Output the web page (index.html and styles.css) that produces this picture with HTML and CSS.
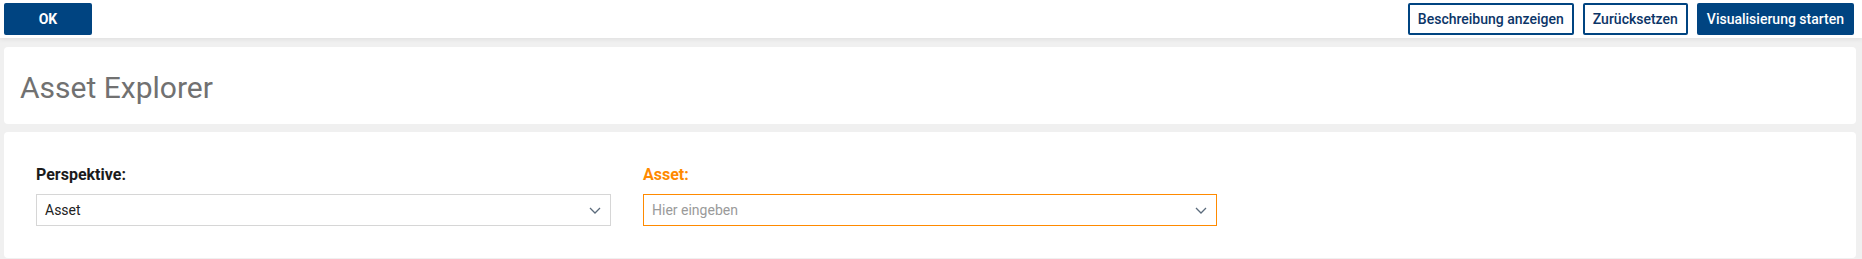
FILE: index.html
```html
<!DOCTYPE html>
<html lang="de">
<head>
<meta charset="utf-8">
<title>Asset Explorer</title>
<link rel="stylesheet" href="styles.css">
</head>
<body>
<header class="topbar">
  <button class="btn btn-primary btn-ok">OK</button>
  <div class="topbar-actions">
    <button class="btn btn-outline">Beschreibung anzeigen</button>
    <button class="btn btn-outline">Zurücksetzen</button>
    <button class="btn btn-primary">Visualisierung starten</button>
  </div>
</header>
<main class="content">
  <section class="panel panel-title">
    <h1 class="title">Asset Explorer</h1>
  </section>
  <section class="panel panel-form">
    <div class="field">
      <label class="field-label">Perspektive:</label>
      <div class="select">
        <span class="select-value">Asset</span>
        <svg class="chevron" width="12" height="7" viewBox="0 0 12 7"><path d="M1 1 L6 6 L11 1" fill="none" stroke="#5b6b7c" stroke-width="1.3"/></svg>
      </div>
    </div>
    <div class="field">
      <label class="field-label field-label-active">Asset:</label>
      <div class="select select-active">
        <span class="select-placeholder">Hier eingeben</span>
        <svg class="chevron" width="12" height="7" viewBox="0 0 12 7"><path d="M1 1 L6 6 L11 1" fill="none" stroke="#5b6b7c" stroke-width="1.3"/></svg>
      </div>
    </div>
  </section>
</main>
</body>
</html>
```
FILE: styles.css
```css
* { box-sizing: border-box; }
html, body {
  margin: 0;
  padding: 0;
}
body {
  background: #f0f0f0;
  font-family: Roboto, "Liberation Sans", Arial, sans-serif;
  color: #222;
  height: 259px;
  overflow: hidden;
}
.topbar {
  height: 38px;
  background: #fff;
  display: flex;
  align-items: flex-start;
  justify-content: space-between;
  padding: 3px 8px 0 4px;
  box-shadow: 0 2px 4px rgba(0,0,0,0.06);
  position: relative;
}
.topbar-actions {
  display: flex;
  gap: 9px;
}
.btn {
  height: 32px;
  font-family: Roboto, "Liberation Sans", Arial, sans-serif;
  font-size: 14px;
  font-weight: 500;
  border-radius: 2px;
  padding: 0 8px;
  cursor: pointer;
  white-space: nowrap;
}
.btn-primary {
  background: #004481;
  border: 2px solid #004481;
  color: #fff;
}
.btn-outline {
  background: #fff;
  border: 2px solid #004481;
  color: #0b3567;
}
.btn-ok {
  width: 88px;
  font-weight: 700;
}
.content {
  padding: 9px 6px 0 4px;
  display: flex;
  flex-direction: column;
  gap: 8px;
}
.panel {
  background: #fff;
  border-radius: 4px;
}
.panel-title {
  height: 77px;
  display: flex;
  align-items: center;
  padding-left: 16px;
}
.title {
  margin: 0;
  font-size: 30px;
  font-weight: 400;
  color: #717171;
  padding-top: 3px;
}
.panel-form {
  height: 126px;
  padding: 34px 32px 32px 32px;
  display: grid;
  grid-template-columns: 575px 574px;
  column-gap: 32px;
}
.field {
  display: flex;
  flex-direction: column;
  gap: 10px;
}
.field-label {
  font-size: 16px;
  line-height: 18px;
  font-weight: 700;
  color: #1b1b1b;
}
.field-label-active {
  color: #ff8a00;
}
.select {
  height: 32px;
  border: 1px solid #d6d6d6;
  display: flex;
  align-items: center;
  justify-content: space-between;
  padding: 0 9px 0 8px;
  font-size: 14px;
}
.select-active {
  border-color: #ff8a00;
}
.select-value {
  color: #222;
}
.select-placeholder {
  color: #9a9a9a;
}
.chevron {
  display: block;
  margin-top: 1px;
}
```
